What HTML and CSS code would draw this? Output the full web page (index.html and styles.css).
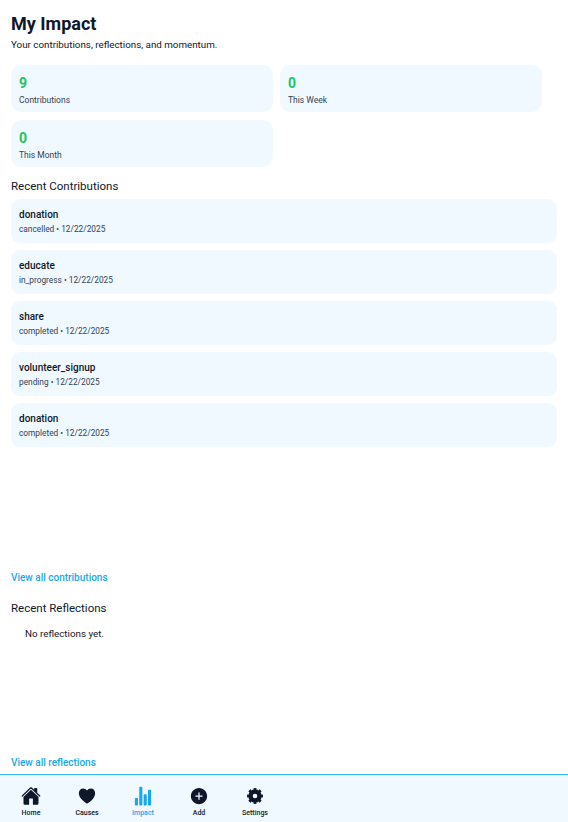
FILE: index.html
```html
<!DOCTYPE html>
<html lang="en">
<head>
    <meta charset="UTF-8">
    <meta name="viewport" content="width=device-width, initial-scale=1.0">
    <title>My Impact</title>
    <link rel="stylesheet" href="styles.css">
</head>
<body>
    <main class="page">
        <h1 class="page-title">My Impact</h1>
        <p class="page-sub">Your contributions, reflections, and momentum.</p>

        <!-- Stats -->
        <div class="stats">
            <div class="stat-card">
                <div class="stat-value">9</div>
                <div class="stat-label">Contributions</div>
            </div>
            <div class="stat-card">
                <div class="stat-value">0</div>
                <div class="stat-label">This Week</div>
            </div>
            <div class="stat-card">
                <div class="stat-value">0</div>
                <div class="stat-label">This Month</div>
            </div>
        </div>

        <!-- Contributions -->
        <h2 class="section-title">Recent Contributions</h2>
        <div class="contrib-list">
            <div class="contrib">
                <div class="contrib-name">donation</div>
                <div class="contrib-meta">cancelled • 12/22/2025</div>
            </div>
            <div class="contrib">
                <div class="contrib-name">educate</div>
                <div class="contrib-meta">in_progress • 12/22/2025</div>
            </div>
            <div class="contrib">
                <div class="contrib-name">share</div>
                <div class="contrib-meta">completed • 12/22/2025</div>
            </div>
            <div class="contrib">
                <div class="contrib-name">volunteer_signup</div>
                <div class="contrib-meta">pending • 12/22/2025</div>
            </div>
            <div class="contrib">
                <div class="contrib-name">donation</div>
                <div class="contrib-meta">completed • 12/22/2025</div>
            </div>
        </div>
        <a class="view-all" href="#">View all contributions</a>

        <!-- Reflections -->
        <h2 class="section-title reflections-title">Recent Reflections</h2>
        <div class="reflections">
            <p class="empty">No reflections yet.</p>
        </div>
        <a class="view-all" href="#">View all reflections</a>
    </main>

    <nav class="tabbar">
        <a class="tab" href="#">
            <svg viewBox="0 0 512 512" width="20" height="20"><path d="M261.56 101.28a8 8 0 00-11.06 0L66.4 277.15a8 8 0 00-2.47 5.79L63.9 448a32 32 0 0032 32H192a16 16 0 0016-16V328a8 8 0 018-8h80a8 8 0 018 8v136a16 16 0 0016 16h96.060a32 32 0 0032-32V282.940a8 8 0 00-2.470-5.790z"/><path d="M490.910 244.150l-74.800-71.560V64a16 16 0 00-16-16h-48a16 16 0 00-16 16v32l-57.920-55.380C272.770 35.140 264.710 32 256 32c-8.680 0-16.720 3.140-22.140 8.630l-212.700 203.500c-6.220 6-7 15.870-1.340 22.370A16 16 0 0043 267.560L250.500 69.280a8 8 0 0111.060 0l207.520 198.280a16 16 0 0022.590-.44c6.140-6.360 5.630-16.860-.76-22.970z"/></svg>
            <span>Home</span>
        </a>
        <a class="tab" href="#">
            <svg viewBox="0 0 512 512" width="20" height="20"><path d="M256 448a32 32 0 01-18-5.570c-78.590-53.350-112.620-90.550-131.390-113.420-40-48.750-59.150-98.800-58.610-153C48.630 114.520 98.460 64 159.080 64c44.080 0 74.610 24.830 92.390 45.510a6 6 0 009.060 0C278.310 88.810 308.840 64 352.920 64c60.620 0 110.450 50.520 111.080 112.640.54 54.210-18.630 104.260-58.610 153-18.770 22.870-52.800 60.070-131.390 113.390a32 32 0 01-18 4.970z"/></svg>
            <span>Causes</span>
        </a>
        <a class="tab tab-active" href="#">
            <svg viewBox="0 0 512 512" width="20" height="20"><path d="M104 496H72a24 24 0 01-24-24V328a24 24 0 0124-24h32a24 24 0 0124 24v144a24 24 0 01-24 24zM328 496h-32a24 24 0 01-24-24V232a24 24 0 0124-24h32a24 24 0 0124 24v240a24 24 0 01-24 24zM440 496h-32a24 24 0 01-24-24V120a24 24 0 0124-24h32a24 24 0 0124 24v352a24 24 0 01-24 24zM216 496h-32a24 24 0 01-24-24V40a24 24 0 0124-24h32a24 24 0 0124 24v432a24 24 0 01-24 24z"/></svg>
            <span>Impact</span>
        </a>
        <a class="tab" href="#">
            <svg viewBox="0 0 512 512" width="20" height="20"><path d="M256 48C141.310 48 48 141.310 48 256s93.310 208 208 208 208-93.310 208-208S370.690 48 256 48zm80 224h-64v64a16 16 0 01-32 0v-64h-64a16 16 0 010-32h64v-64a16 16 0 0132 0v64h64a16 16 0 010 32z"/></svg>
            <span>Add</span>
        </a>
        <a class="tab" href="#">
            <svg viewBox="0 0 20 20" width="20" height="20"><circle class="gear-body" cx="10" cy="10" r="4.500"/><circle class="gear-teeth" cx="10" cy="10" r="7" pathLength="80"/></svg>
            <span>Settings</span>
        </a>
    </nav>
</body>
</html>
```

FILE: styles.css
```css
* {
    box-sizing: border-box;
}
body {
    font-family: Roboto, "Noto Sans", Arial, sans-serif;
    background-color: #fff;
    color: #0f172a;
    margin: 0;
    padding: 0;
    height: 822px;
    overflow: hidden;
}
.page {
    height: 774px;
    padding: 13px 11px 0;
}
.page-title {
    font-size: 18px;
    line-height: 22px;
    font-weight: 700;
    margin: 0;
}
.page-sub {
    font-size: 9.800px;
    line-height: 12px;
    margin: 4px 0 0;
}
.stats {
    display: flex;
    flex-wrap: wrap;
    gap: 8px 7.500px;
    margin-top: 14px;
}
.stat-card {
    width: 261.500px;
    height: 47px;
    padding: 9px 8px 0;
    background-color: #f0f9ff;
    border-radius: 10px;
}
.stat-value {
    font-size: 14px;
    line-height: 18px;
    font-weight: 700;
    color: #22c55e;
}
.stat-label {
    font-size: 8.500px;
    line-height: 12px;
    margin-top: 2px;
    color: #334155;
}
.section-title {
    font-size: 11.500px;
    line-height: 16px;
    font-weight: 400;
    margin: 11px 0 0;
}
.contrib-list {
    display: flex;
    flex-direction: column;
    gap: 7px;
    height: 372px;
    margin-top: 5px;
}
.contrib {
    height: 44px;
    padding: 9px 8px 0;
    background-color: #f0f9ff;
    border-radius: 9px;
}
.contrib-name {
    font-size: 10px;
    line-height: 14px;
    font-weight: 500;
}
.contrib-meta {
    font-size: 8.300px;
    line-height: 11px;
    margin-top: 2px;
    color: #334155;
}
.view-all {
    display: block;
    font-size: 10px;
    line-height: 14px;
    font-weight: 500;
    color: #18a8ee;
    text-decoration: none;
}
.reflections-title {
    margin-top: 15px;
}
.reflections {
    height: 140px;
    padding: 11px 14px 0;
}
.empty {
    font-size: 9.800px;
    line-height: 14px;
    margin: 0;
}
.tabbar {
    display: flex;
    height: 48px;
    padding: 11px 3px 0;
    background-color: #f0f9ff;
    border-top: 1px solid #38b6ee;
}
.tab {
    display: flex;
    flex-direction: column;
    align-items: center;
    width: 56px;
    color: #0f172a;
    fill: #0f172a;
    text-decoration: none;
    font-size: 7px;
    line-height: 10px;
    font-weight: 500;
}
.tab span {
    margin-top: 2px;
}
.tab-active {
    color: #18a8ee;
    fill: #18a8ee;
}
.gear-body {
    fill: none;
    stroke: #0f172a;
    stroke-width: 4.400;
}
.gear-teeth {
    fill: none;
    stroke: #0f172a;
    stroke-width: 2;
    stroke-dasharray: 5 5;
    stroke-dashoffset: 2.500;
}
```
